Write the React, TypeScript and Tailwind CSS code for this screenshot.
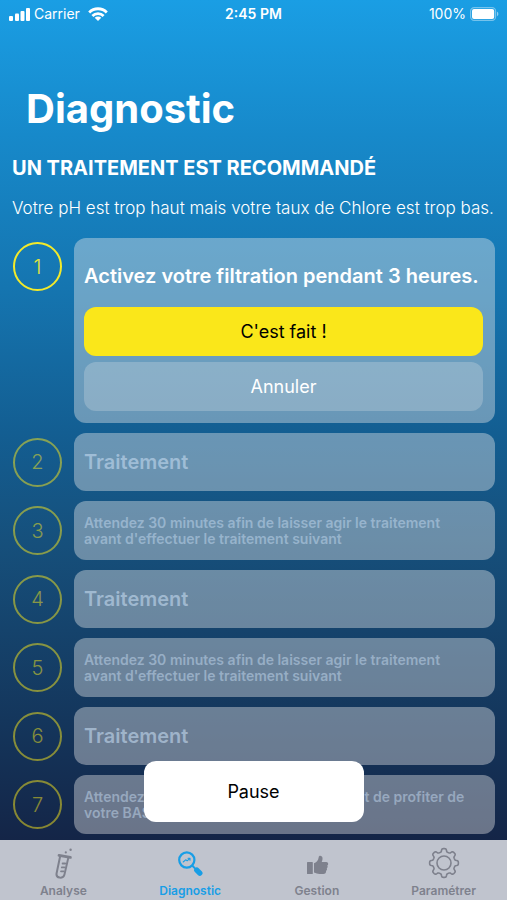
import React, { useState } from 'react';
import clsx from 'clsx';

interface Step {
  id: number;
  kind: 'treatment' | 'note';
  text: string;
}

const steps: Step[] = [
  { id: 2, kind: 'treatment', text: 'Traitement' },
  { id: 3, kind: 'note', text: "Attendez 30 minutes afin de laisser agir le traitement avant d'effectuer le traitement suivant" },
  { id: 4, kind: 'treatment', text: 'Traitement' },
  { id: 5, kind: 'note', text: "Attendez 30 minutes afin de laisser agir le traitement avant d'effectuer le traitement suivant" },
  { id: 6, kind: 'treatment', text: 'Traitement' },
  { id: 7, kind: 'note', text: 'Attendez encore 1 heure de filtration avant de profiter de votre BASSIN' },
];

function TubeIcon() {
  return (
    <svg width="32" height="32" viewBox="0 0 32 32" fill="none" stroke="currentColor" strokeWidth="2" strokeLinecap="round" strokeLinejoin="round">
      <path d="M12 8.4 23.4 10.4" strokeWidth="2.8" />
      <path d="M13.2 9 9.6 26.2c-.5 2.6 1 4 3 4.400 2.300.4 4.400-.6 4.900-3.200L21.400 10.400" />
      <path d="M18.2 16.5h-2.6M17.4 20.4h-2.6M16.6 24.3H14" strokeWidth="1.8" />
      <circle cx="18.8" cy="5.4" r="1.1" fill="currentColor" stroke="none" />
      <circle cx="23.6" cy="2.8" r="1.2" fill="currentColor" stroke="none" />
    </svg>
  );
}

function MagnifierIcon() {
  return (
    <svg width="32" height="32" viewBox="0 0 32 32" fill="none" stroke="currentColor" strokeLinecap="round" strokeLinejoin="round">
      <circle cx="12.8" cy="13" r="7.6" strokeWidth="2.2" />
      <path d="M18.4 18.8 21 21.4" strokeWidth="2" />
      <path d="M22.8 23.2 25.8 26.2" strokeWidth="5.4" />
      <path d="M9.2 15 11.6 12.8 13.2 13.8 15.8 11.4M14 11.2h2v2" strokeWidth="1.1" />
    </svg>
  );
}

function ThumbIcon() {
  return (
    <svg width="32" height="32" viewBox="0 0 32 32" fill="currentColor">
      <rect x="6" y="15" width="5.8" height="12" rx="0.6" />
      <path d="M13 16.2c2.2-.7 4.4-2.8 4.7-6 .1-1.1.8-1.6 1.7-1.5 1.9.2 2.3 2 2.1 3.5-.1 1-.5 2-.8 2.8h4.5c1.2 0 2 .8 2 1.9 0 .8-.4 1.3-.9 1.6.3.4.4.9.3 1.4-.1.6-.4 1-.8 1.3.2.4.3.9.2 1.4-.1.6-.5 1.1-1 1.3.1.3.1.7 0 1.1-.2 1.2-1.1 1.9-2.6 1.9h-3.9c-2 0-3.4-.9-5.5-1.5z" />
    </svg>
  );
}

// Eight rounded teeth around the centre
const gearPath =
  'M' +
  Array.from({ length: 161 }, (_, i) => {
    const a = (i / 160) * Math.PI * 2;
    const r = 12.8 + 1.6 * Math.tanh(2.4 * Math.cos(8 * a));
    return `${(16 + r * Math.sin(a)).toFixed(2)} ${(16 - r * Math.cos(a)).toFixed(2)}`;
  }).join('L') +
  'Z';

function GearIcon() {
  return (
    <svg width="32" height="32" viewBox="0 0 32 32" fill="none" stroke="currentColor" strokeWidth="1.6" strokeLinejoin="round">
      <circle cx="16" cy="16" r="7" />
      <path d={gearPath} />
    </svg>
  );
}

const tabs = [
  { id: 'analyse', label: 'Analyse', icon: <TubeIcon /> },
  { id: 'diagnostic', label: 'Diagnostic', icon: <MagnifierIcon /> },
  { id: 'gestion', label: 'Gestion', icon: <ThumbIcon /> },
  { id: 'parametrer', label: 'Paramétrer', icon: <GearIcon /> },
];

function StatusBar() {
  return (
    <div className="grid h-7 grid-cols-3 items-center px-2 text-sm">
      <div className="flex items-center gap-1">
        <svg width="22" height="14" viewBox="0 0 22 14" fill="currentColor">
          <rect x="1" y="9" width="4" height="5" rx="1" />
          <rect x="7" y="6.5" width="4" height="7.5" rx="1" />
          <rect x="12.5" y="4" width="4" height="10" rx="1" />
          <rect x="18" y="1" width="4" height="13" rx="1" />
        </svg>
        <span>Carrier</span>
        <svg className="ml-1" width="20" height="14" viewBox="0 0 20 14" fill="none" stroke="currentColor" strokeWidth="2.8">
          <path d="M1.2 5.4a12.4 12.4 0 0 1 17.6 0" />
          <path d="M4.4 8.9a7.9 7.9 0 0 1 11.2 0" />
          <path d="M10 14 6.7 10.8a4.6 4.6 0 0 1 6.6 0z" fill="currentColor" stroke="none" />
        </svg>
      </div>
      <span className="text-center font-semibold">2:45 PM</span>
      <div className="flex items-center justify-end gap-1">
        <span>100%</span>
        <svg width="29" height="14" viewBox="0 0 29 14">
          <rect x="0.6" y="0.6" width="25" height="12.8" rx="3.6" fill="none" stroke="white" strokeOpacity="0.4" strokeWidth="1.2" />
          <rect x="2" y="2" width="22.2" height="10" rx="2" fill="white" />
          <path d="M27 4.8c1.8.6 1.8 3.8 0 4.4z" fill="white" fillOpacity="0.5" />
        </svg>
      </div>
    </div>
  );
}

function StepNumber({ value, active }: { value: number; active?: boolean }) {
  return (
    <div
      className={clsx(
        'flex size-[49px] shrink-0 items-center justify-center rounded-full border-2 text-xl font-light',
        active ? 'border-[#f3ea2a] text-[#e9e63a]' : 'border-[#f9e81c]/50 text-[#f9e81c]/50'
      )}
    >
      {value}
    </div>
  );
}

export default function App() {
  const [tab, setTab] = useState('diagnostic');

  return (
    <div className="flex min-h-screen flex-col bg-linear-[180deg,#1a9ee4_0%,#1789ca_15%,#1575b0_32%,#135e92_48%,#16507c_60%,#14365c_80%,#142446_94%] font-['Inter','Liberation_Sans',sans-serif] text-white">
      <StatusBar />

      <main className="relative flex-1 px-3 pb-1.5">
        <h1 className="px-3.5 pt-14 text-[40px] leading-[50px] font-bold">Diagnostic</h1>
        <h2 className="mt-5 text-xl leading-7 font-bold">UN TRAITEMENT EST RECOMMANDÉ</h2>
        <p className="-mr-3 mt-3.5 text-[17px] leading-6 font-light">Votre pH est trop haut mais votre taux de Chlore est trop bas.</p>

        <ol className="mt-[18px] flex flex-col gap-2.5 pl-px">
          {/* Current step */}
          <li className="flex gap-3">
            <div className="pt-1">
              <StepNumber value={1} active />
            </div>
            <div className="flex-1 rounded-xl bg-[#eaeaea]/40 pt-[23px] pr-3 pb-3 pl-2.5">
              <p className="-mr-2 text-xl leading-[30px] font-semibold">Activez votre filtration pendant 3 heures.</p>
              <button type="button" className="mt-4 block h-[49px] w-full rounded-xl bg-[#fae71a] text-lg text-black">
                C'est fait !
              </button>
              <button type="button" className="mt-1.5 block h-[49px] w-full rounded-xl bg-[#eaeaea]/25 text-lg">
                Annuler
              </button>
            </div>
          </li>

          {/* Upcoming steps */}
          {steps.map((step) => (
            <li key={step.id} className="flex items-center gap-3">
              <StepNumber value={step.id} />
              {step.kind === 'treatment' ? (
                <div className="flex min-h-[58px] flex-1 items-center rounded-xl bg-[#eaeaea]/40 px-2.5 text-xl font-semibold text-[#c4daf0]/60">
                  {step.text}
                </div>
              ) : (
                <div className="flex min-h-[59px] flex-1 items-center rounded-xl bg-[#eaeaea]/40 pr-5 pl-2.5 text-sm leading-4 font-semibold text-[#c4daf0]/50">
                  {step.text}
                </div>
              )}
            </li>
          ))}
        </ol>

        <button
          type="button"
          className="absolute bottom-[18px] left-1/2 h-[61px] w-[220px] -translate-x-1/2 rounded-xl bg-white text-lg text-black"
        >
          Pause
        </button>
      </main>

      <nav className="grid h-[60px] grid-cols-4 bg-[#c0c4ce]">
        {tabs.map((item) => (
          <button
            key={item.id}
            type="button"
            onClick={() => setTab(item.id)}
            className={clsx(
              'flex flex-col items-center pt-[7px] text-xs leading-4 font-semibold',
              tab === item.id ? 'text-[#189ee6]' : 'text-[#7e818d]'
            )}
          >
            {item.icon}
            <span className="mt-1">{item.label}</span>
          </button>
        ))}
      </nav>
    </div>
  );
}
